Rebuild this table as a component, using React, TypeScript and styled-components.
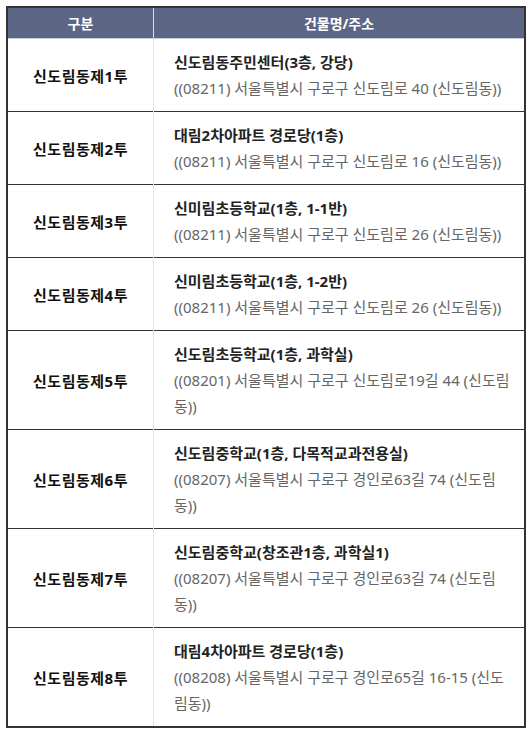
import React from "react";
import styled, { createGlobalStyle } from "styled-components";

const Global = createGlobalStyle`
  html, body { margin: 0; padding: 0; background: #fff; }
  body { font-family: "Noto Sans", "Noto Sans CJK KR", sans-serif; }
`;

const Wrap = styled.div`
  padding: 6px 6px 0 6px;
`;

const Table = styled.table`
  width: 520px;
  border-collapse: collapse;
  border: 2px solid #333;
  table-layout: fixed;
  font-size: 15px;
`;

const Th = styled.th<{ $w?: number }>`
  background: #5c6684;
  color: #fff;
  font-weight: 700;
  font-size: 14px;
  height: 30px;
  padding: 0;
  text-align: center;
  border-bottom: 1px solid #c9cedd;
  border-left: 1px solid #d9dce6;
  &:first-child { border-left: none; }
  ${(p) => (p.$w ? `width: ${p.$w}px;` : "")}
`;

const Tr = styled.tr`
  border-bottom: 1px solid #333;
  &:last-child { border-bottom: none; }
`;

const NameCell = styled.td`
  text-align: center;
  font-weight: 700;
  color: #111;
  font-size: 15px;
  letter-spacing: 0.5px;
  vertical-align: middle;
  border-right: 1px solid #e2e2e2;
  padding: 0;
`;

const InfoCell = styled.td`
  padding: 10px 12px 10px 20px;
  line-height: 26px;
  vertical-align: middle;
`;

const Place = styled.div`
  font-weight: 700;
  color: #222;
`;

const Addr = styled.div`
  color: #666;
`;

const rows = [
  ["신도림동제1투", "신도림동주민센터(3층, 강당)", "((08211) 서울특별시 구로구 신도림로 40 (신도림동))"],
  ["신도림동제2투", "대림2차아파트 경로당(1층)", "((08211) 서울특별시 구로구 신도림로 16 (신도림동))"],
  ["신도림동제3투", "신미림초등학교(1층, 1-1반)", "((08211) 서울특별시 구로구 신도림로 26 (신도림동))"],
  ["신도림동제4투", "신미림초등학교(1층, 1-2반)", "((08211) 서울특별시 구로구 신도림로 26 (신도림동))"],
  ["신도림동제5투", "신도림초등학교(1층, 과학실)", "((08201) 서울특별시 구로구 신도림로19길 44 (신도림동))"],
  ["신도림동제6투", "신도림중학교(1층, 다목적교과전용실)", "((08207) 서울특별시 구로구 경인로63길 74 (신도림동))"],
  ["신도림동제7투", "신도림중학교(창조관1층, 과학실1)", "((08207) 서울특별시 구로구 경인로63길 74 (신도림동))"],
  ["신도림동제8투", "대림4차아파트 경로당(1층)", "((08208) 서울특별시 구로구 경인로65길 16-15 (신도림동))"],
];

export default function App() {
  return (
    <Wrap>
      <Global />
      <Table>
        <thead>
          <tr>
            <Th $w={145}>구분</Th>
            <Th>건물명/주소</Th>
          </tr>
        </thead>
        <tbody>
          {rows.map(([n, p, a]) => (
            <Tr key={n}>
              <NameCell>{n}</NameCell>
              <InfoCell>
                <Place>{p}</Place>
                <Addr>{a}</Addr>
              </InfoCell>
            </Tr>
          ))}
        </tbody>
      </Table>
    </Wrap>
  );
}
